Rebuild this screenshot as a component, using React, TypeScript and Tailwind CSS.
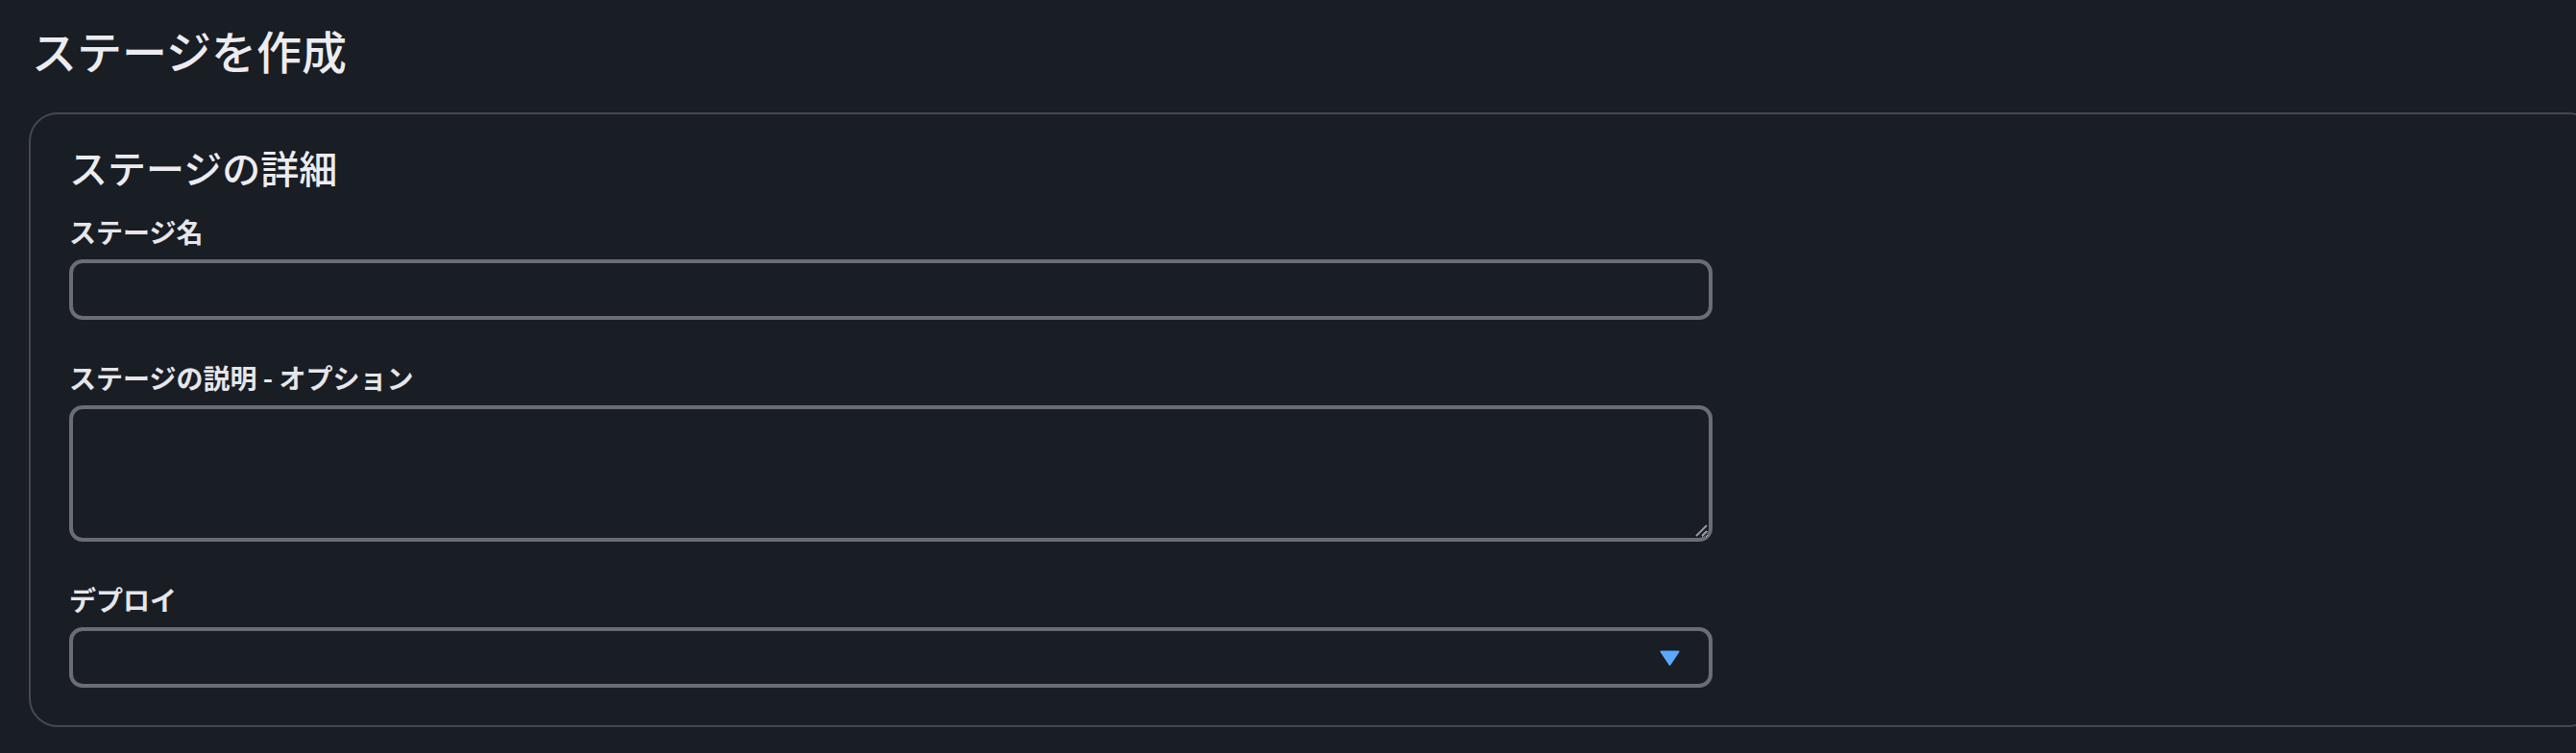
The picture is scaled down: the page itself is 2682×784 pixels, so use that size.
const font = "font-['Noto_Sans_CJK_JP','Noto_Sans',sans-serif]";

function Field({ label, children }: { label: string; children: React.ReactNode }) {
  return (
    <div className="flex flex-col gap-[11px]">
      <label className="text-[28px] leading-[36px] font-bold text-[#e6e6ea]">{label}</label>
      {children}
    </div>
  );
}

export default function App() {
  return (
    <div className={`min-h-screen overflow-hidden bg-[#191d24] pl-[30px] pt-[22px] pb-[24px] ${font}`}>
      <h1 className="pl-[3px] text-[47px] leading-[60px] font-medium text-[#ececf0]">ステージを作成</h1>

      <div className="mt-[35px] mr-[-22px] rounded-[30px] border-2 border-[#464850] pl-[40px] pt-[30px] pb-[39px]">
        <h2 className="text-[40px] leading-[50px] font-medium text-[#ececf0]">ステージの詳細</h2>

        <div className="mt-[24px] flex w-[1711px] flex-col gap-[42px]">
          <Field label="ステージ名">
            <input
              type="text"
              className="h-[63px] w-full rounded-[14px] border-4 border-[#6b6d75] bg-transparent px-4 text-[28px] text-[#e6e6ea] outline-none"
            />
          </Field>

          <Field label="ステージの説明 - オプション">
            <div className="relative">
              <textarea className="block h-[142px] w-full resize-y rounded-[14px] border-4 border-[#6b6d75] bg-transparent px-4 py-3 text-[28px] text-[#e6e6ea] outline-none" />
              {/* resize grip */}
              <svg
                className="pointer-events-none absolute bottom-[5px] right-[5px]"
                width="14"
                height="14"
                viewBox="0 0 14 14"
              >
                <path d="M2 13 L13 2 M8 13 L13 8" stroke="#9a9ca3" strokeWidth="1.8" />
              </svg>
            </div>
          </Field>

          <Field label="デプロイ">
            <div className="relative h-[63px] w-full rounded-[14px] border-4 border-[#6b6d75]">
              <svg
                className="absolute right-[30px] top-1/2 -translate-y-1/2"
                width="21"
                height="16"
                viewBox="0 0 21 16"
              >
                <path d="M1.5 1.5 H19.5 L10.5 15 Z" fill="#5aa9ff" stroke="#5aa9ff" strokeWidth="2" strokeLinejoin="round" />
              </svg>
            </div>
          </Field>
        </div>
      </div>
    </div>
  );
}
